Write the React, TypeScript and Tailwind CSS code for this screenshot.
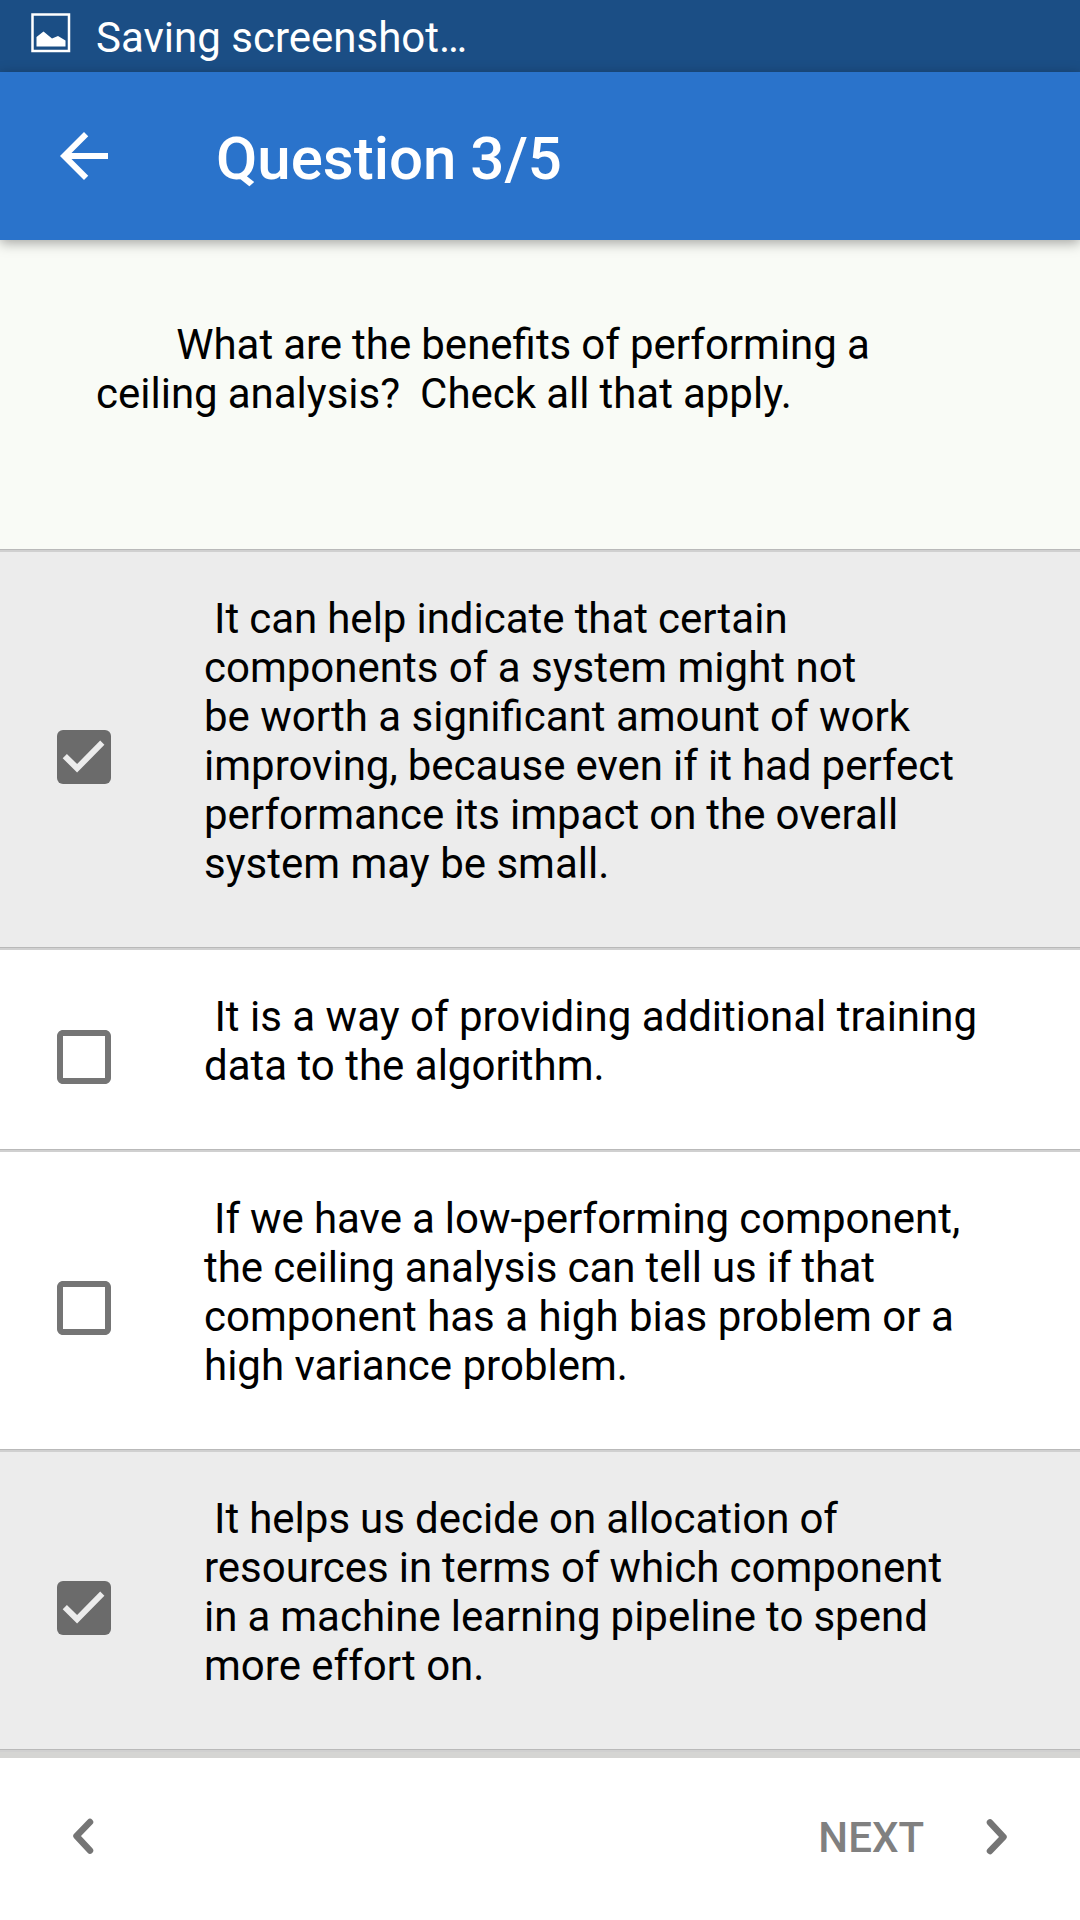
const Check = ({ on }: { on: boolean }) => (
  <svg className="mt-[14px] ml-[48px] size-[72px] shrink-0" viewBox="0 0 24 24" fill={on ? '#6b6b6b' : '#757575'}>
    {on ? (
      <>
        <rect x="3" y="3" width="18" height="18" rx="2" />
        <path fill="#ececec" d="M9.700 17.200l-4.800-4.800 1.400-1.400 3.400 3.300 7.700-7.800L18.800 7.900z" />
      </>
    ) : (
      <path d="M19 5v14H5V5h14m0-2H5c-1.100 0-2 .9-2 2v14c0 1.100.9 2 2 2h14c1.100 0 2-.9 2-2V5c0-1.100-.9-2-2-2z" />
    )}
  </svg>
);

const Divider = () => (
  <div className="h-[3px] shrink-0 bg-[#d0d0d0]">
    <div className="h-px bg-[#b9b9b9]" />
  </div>
);

type Line = { text: string; tight?: boolean };

const answers: { on: boolean; h: string; lines: Line[] }[] = [
  {
    on: true,
    h: 'h-[395px]',
    lines: [
      { text: ' It can help indicate that certain', tight: true },
      { text: 'components of a system might not' },
      { text: 'be worth a significant amount of work' },
      { text: 'improving, because even if it had perfect', tight: true },
      { text: 'performance its impact on the overall', tight: true },
      { text: 'system may be small.' },
    ],
  },
  {
    on: false,
    h: 'h-[199px]',
    lines: [{ text: ' It is a way of providing additional training' }, { text: 'data to the algorithm.' }],
  },
  {
    on: false,
    h: 'h-[297px]',
    lines: [
      { text: ' If we have a low-performing component,', tight: true },
      { text: 'the ceiling analysis can tell us if that', tight: true },
      { text: 'component has a high bias problem or a' },
      { text: 'high variance problem.' },
    ],
  },
  {
    on: true,
    h: 'h-[297px]',
    lines: [
      { text: ' It helps us decide on allocation of', tight: true },
      { text: 'resources in terms of which component', tight: true },
      { text: 'in a machine learning pipeline to spend', tight: true },
      { text: 'more effort on.' },
    ],
  },
];

export default function App() {
  return (
    <div className="flex h-[1920px] w-[1080px] flex-col overflow-hidden bg-white font-[Roboto,sans-serif] text-black">
      <div className="flex h-[72px] shrink-0 items-center bg-[#1b4e85] text-white">
        <svg className="mb-[6px] ml-[31px] size-[40px]" viewBox="0 0 40 40">
          <rect x="1.500" y="1.500" width="36.500" height="36.500" fill="none" stroke="white" strokeWidth="2.500" />
          <path fill="white" d="M5.500 33.500V24l7-5.500 8.500 7 6-2.500 7.500 4.500v6z" />
        </svg>
        <span className="mt-[3px] ml-[25px] text-[42px] leading-[49px]">Saving screenshot…</span>
      </div>
      <header className="z-10 flex h-[168px] shrink-0 items-center bg-[#2a73cb] text-white shadow-[0_3px_12px_rgba(0,0,0,0.35)]">
        <svg className="ml-[48px] size-[72px]" viewBox="0 0 24 24" fill="white">
          <path d="M20 11H7.830l5.590-5.590L12 4l-8 8 8 8 1.410-1.410L7.830 13H20v-2z" />
        </svg>
        <h1 className="mt-[6px] ml-[96px] text-[60px] font-medium [word-spacing:-1px]">Question 3/5</h1>
      </header>
      <div className="h-[309px] shrink-0 bg-[#f9fbf6] pt-[80px] pl-[96px]">
        <p className="text-[42px] leading-[49px] whitespace-pre [word-spacing:-0.4px]">{'        What are the benefits of performing a\nceiling analysis?  Check all that apply.'}</p>
      </div>
      {answers.map((a) => (
        <div key={a.lines[0].text} className="shrink-0">
          <Divider />
          <div className={`flex items-center ${a.h} ${a.on ? 'bg-[#ececec]' : 'bg-white'}`}>
            <Check on={a.on} />
            <p className="-mt-[17px] ml-[84px] text-[42px] leading-[49px] whitespace-pre">
              {a.lines.map((l) => (
                <span key={l.text} className={l.tight ? 'block [word-spacing:-0.4px]' : 'block'}>
                  {l.text}
                </span>
              ))}
            </p>
          </div>
        </div>
      ))}
      <Divider />
      <div className="h-[6px] shrink-0 bg-[#d5d5d3]" />
      <footer className="flex flex-1 items-center justify-between pb-[5px] text-[#757575]">
        <svg className="ml-[47px] size-[72px]" viewBox="0 0 72 72" fill="none" stroke="currentColor" strokeWidth="6.500" strokeLinecap="round" strokeLinejoin="round">
          <path d="M43 21L29.500 35L43 49.500" />
        </svg>
        <div className="mr-[48px] flex items-center">
          <span className="mt-[2px] text-[42px] leading-[49px] font-medium text-[#808080]">NEXT</span>
          <svg className="ml-[36px] size-[72px]" viewBox="0 0 72 72" fill="none" stroke="currentColor" strokeWidth="6.500" strokeLinecap="round" strokeLinejoin="round">
            <path d="M30 21.500L43.500 36L30 50" />
          </svg>
        </div>
      </footer>
    </div>
  );
}
